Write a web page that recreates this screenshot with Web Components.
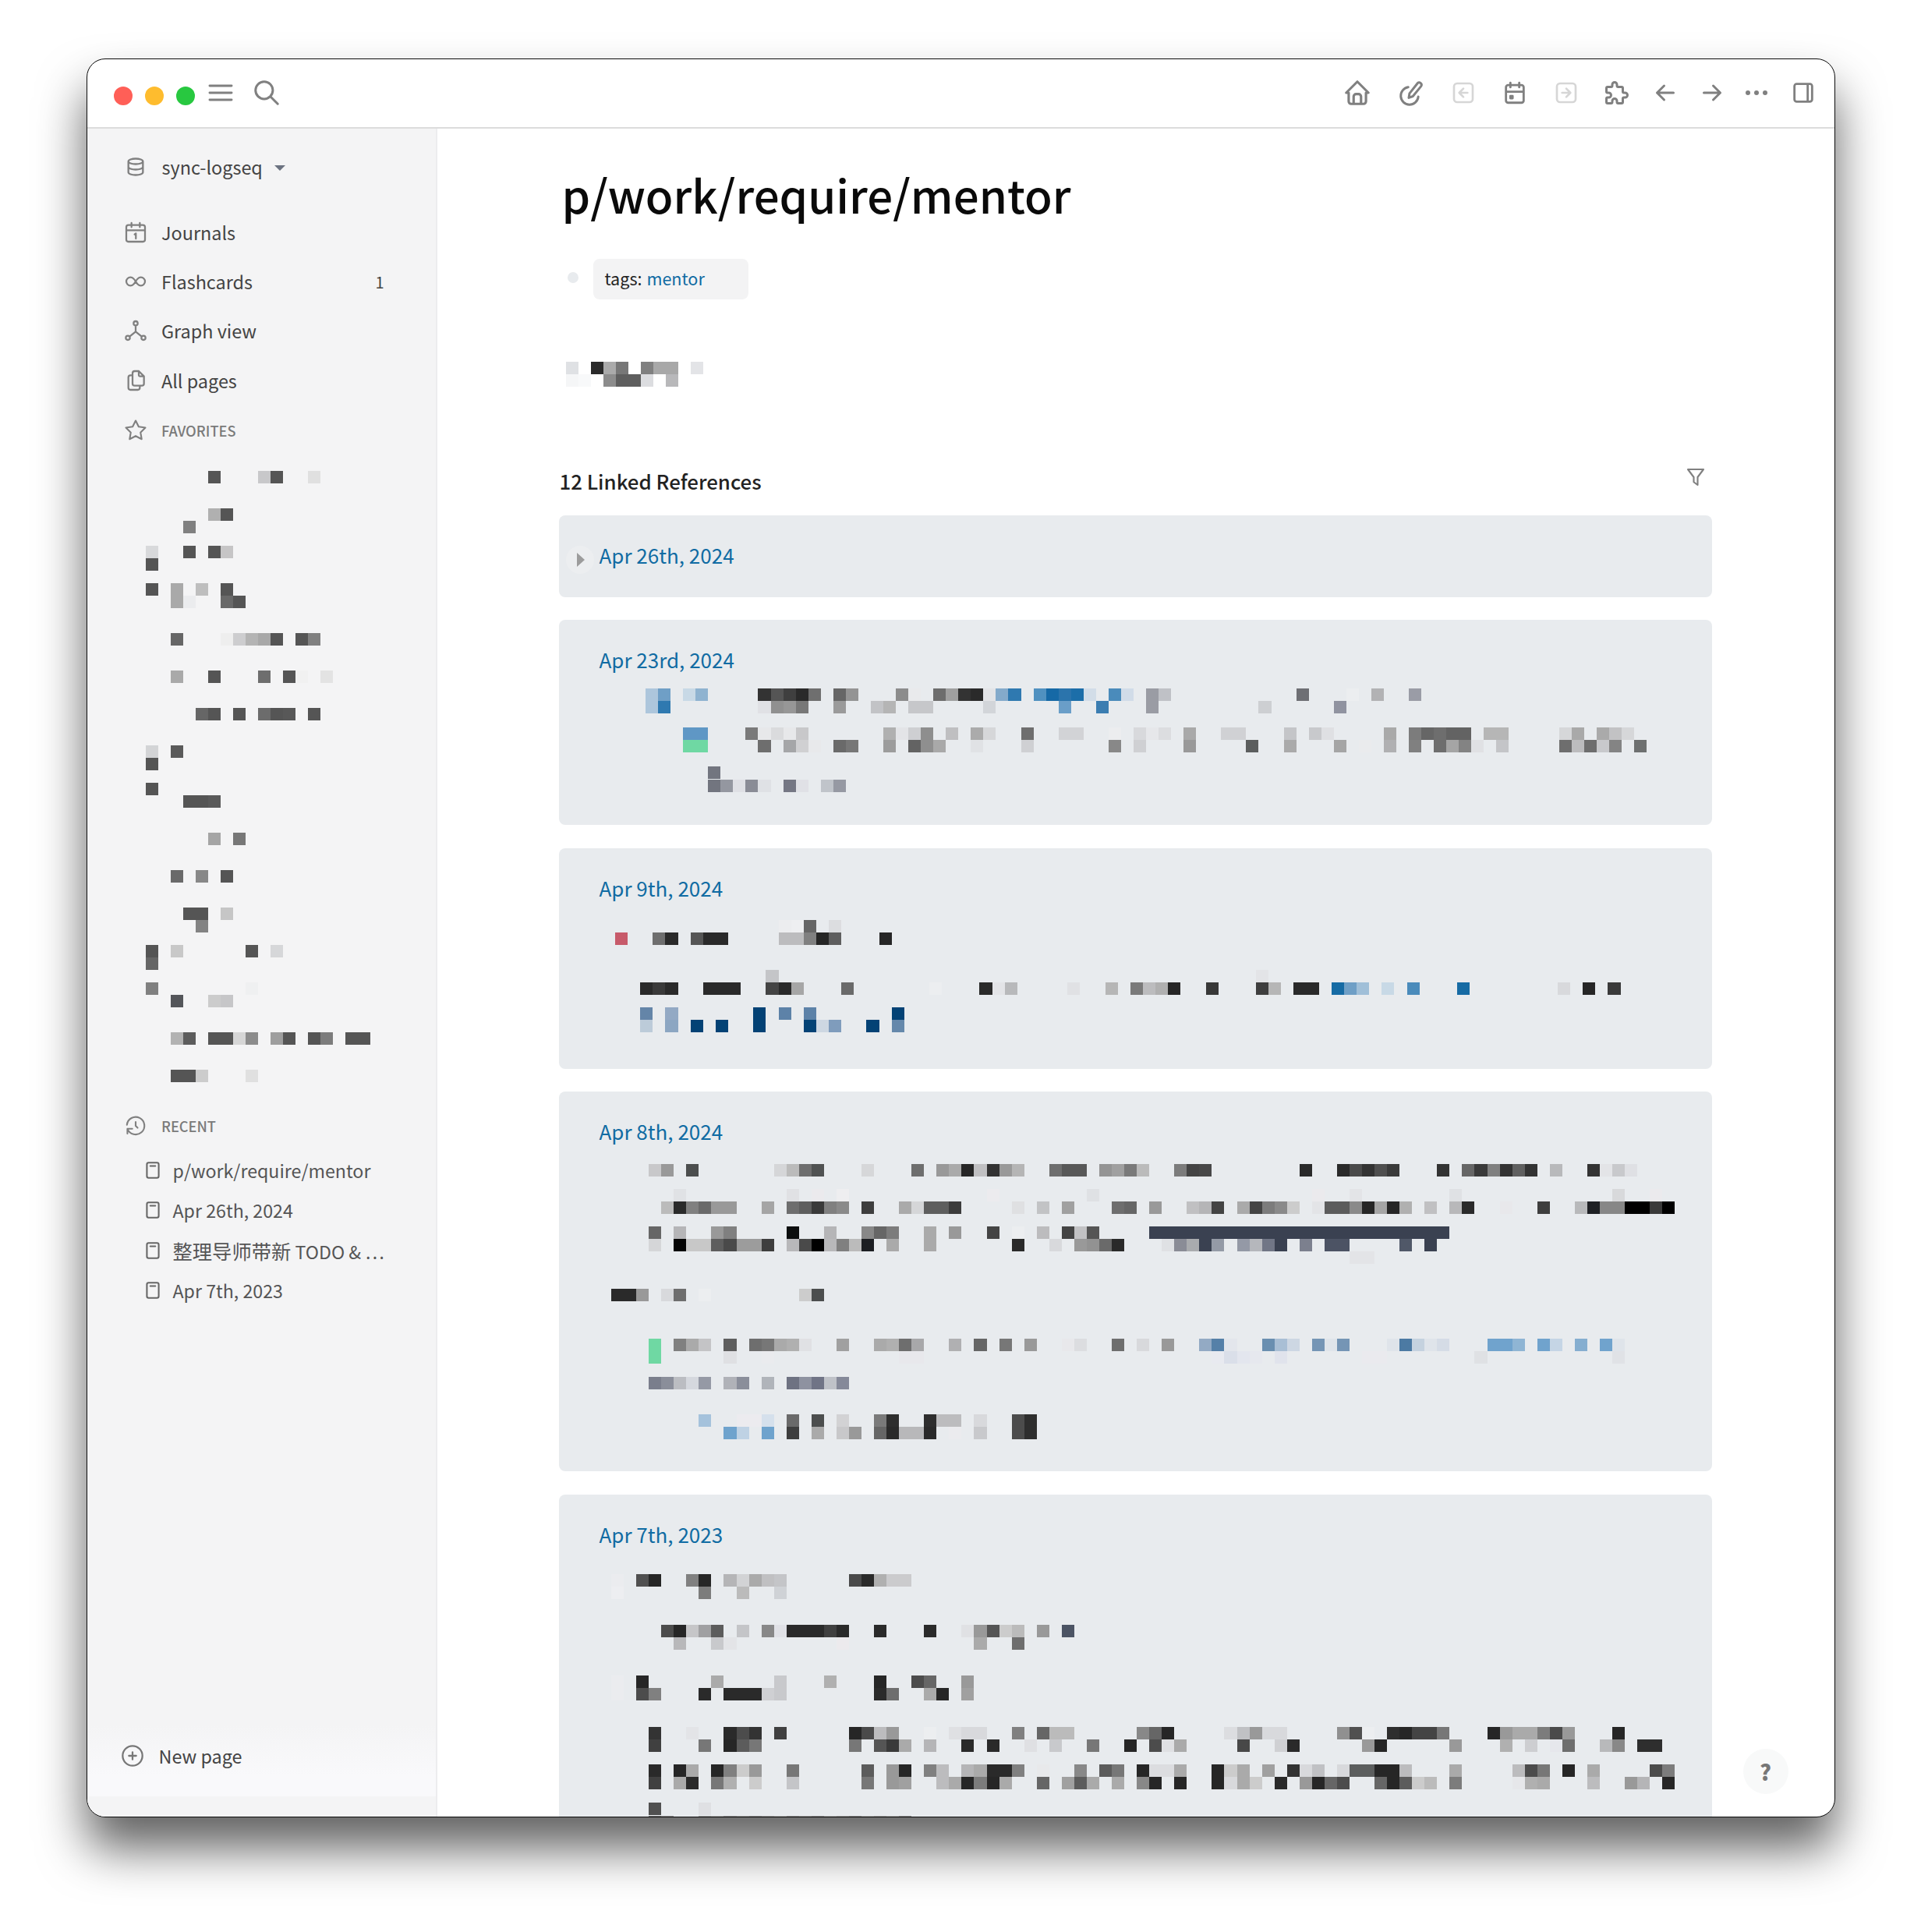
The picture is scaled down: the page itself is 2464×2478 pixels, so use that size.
<!DOCTYPE html>
<html>
<head>
<meta charset="utf-8">
<title>p/work/require/mentor</title>
<style>
  html, body { margin: 0; background: #fff; overflow: hidden; }
  body { font-family: "Noto Sans CJK SC", "Noto Sans", sans-serif; width: 2464px; height: 2478px; }
  .cjk { font-size: 25.3px; }
</style>
</head>
<body>
<app-window>
  <title-bar slot="top"></title-bar>
  <side-bar slot="side">
    <repo-switch>sync-logseq</repo-switch>
    <nav-item icon="calendar1">Journals</nav-item>
    <nav-item icon="infinity" count="1">Flashcards</nav-item>
    <nav-item icon="graph">Graph view</nav-item>
    <nav-item icon="files">All pages</nav-item>
    <nav-item icon="star" size="30" heading style="padding-top:2px">FAVORITES</nav-item>
    <mosaic-block name="favorites" cell="16" style="margin-left:75px;margin-top:21px" h="784"></mosaic-block>
    <nav-item icon="history" size="30" heading style="margin-top:24px">RECENT</nav-item>
    <recent-item>p/work/require/mentor</recent-item>
    <recent-item>Apr 26th, 2024</recent-item>
    <recent-item><span class="cjk">整理导师带新</span>&nbsp;TODO &amp; …</recent-item>
    <recent-item>Apr 7th, 2023</recent-item>
    <new-page slot="foot">New page</new-page>
  </side-bar>
  <page-main slot="main">
    <page-props slot="props"><a>mentor</a></page-props>
    <mosaic-block slot="props" name="pageline" cell="16" h="33" style="margin-left:9px;margin-top:80px"></mosaic-block>
    <ref-card date="Apr 26th, 2024" collapsed></ref-card>
    <ref-card date="Apr 23rd, 2024"><mosaic-block name="apr23" ox="60" h="158"></mosaic-block></ref-card>
    <ref-card date="Apr 9th, 2024"><mosaic-block name="apr9" ox="21" cell="16.12" h="178"></mosaic-block></ref-card>
    <ref-card date="Apr 8th, 2024"><mosaic-block name="apr8" ox="16" h="382"></mosaic-block></ref-card>
    <ref-card date="Apr 7th, 2023"><mosaic-block name="apr7" ox="16" h="500"></mosaic-block></ref-card>
    <help-button slot="over"></help-button>
  </page-main>
</app-window>

<script>
// tabler-ish icon paths, all on a 24 box
const ICONS = {
  home: 'M5 12H3l9-9 9 9h-2M5 12v7a2 2 0 0 0 2 2h10a2 2 0 0 0 2-2v-7M9 21v-6a2 2 0 0 1 2-2h2a2 2 0 0 1 2 2v6',
  sketch: 'M17.5 3.8a2 2 0 0 1 3 2.6L13.5 15l-3.5 1.3.6-3.7zM9.5 7.2a7.5 7.5 0 1 0 8.6 8.2',
  backbox: 'M6 3h12a3 3 0 0 1 3 3v12a3 3 0 0 1-3 3H6a3 3 0 0 1-3-3V6a3 3 0 0 1 3-3zM8 12h8M8 12l4 4M8 12l4-4',
  fwdbox: 'M6 3h12a3 3 0 0 1 3 3v12a3 3 0 0 1-3 3H6a3 3 0 0 1-3-3V6a3 3 0 0 1 3-3zM16 12H8M16 12l-4 4M16 12l-4-4',
  calendar: 'M6 5h12a2 2 0 0 1 2 2v12a2 2 0 0 1-2 2H6a2 2 0 0 1-2-2V7a2 2 0 0 1 2-2zM16 3v4M8 3v4M4 11h16M8 15h2v2H8z',
  puzzle: 'M4 7h3a1 1 0 0 0 1-1V5a2 2 0 0 1 4 0v1a1 1 0 0 0 1 1h3a1 1 0 0 1 1 1v3a1 1 0 0 0 1 1h1a2 2 0 0 1 0 4h-1a1 1 0 0 0-1 1v3a1 1 0 0 1-1 1h-3a1 1 0 0 1-1-1v-1a2 2 0 0 0-4 0v1a1 1 0 0 1-1 1H4a1 1 0 0 1-1-1v-3a1 1 0 0 1 1-1h1a2 2 0 0 0 0-4H4a1 1 0 0 1-1-1V8a1 1 0 0 1 1-1',
  left: 'M5 12h14M5 12l6 6M5 12l6-6',
  right: 'M5 12h14M19 12l-6 6M19 12l-6-6',
  panel: 'M6 4h12a2 2 0 0 1 2 2v12a2 2 0 0 1-2 2H6a2 2 0 0 1-2-2V6a2 2 0 0 1 2-2zM16 4v16',
  search: 'M10 10m-7 0a7 7 0 1 0 14 0a7 7 0 1 0-14 0M21 21l-6-6',
  menu: 'M4 6.9h16M4 12h16M4 17.1h16',
  database: 'M12 6m-8 0a8 3 0 1 0 16 0a8 3 0 1 0-16 0M4 6v6a8 3 0 0 0 16 0V6M4 12v6a8 3 0 0 0 16 0v-6',
  calendar1: 'M5 5h14a2 2 0 0 1 2 2v12a2 2 0 0 1-2 2H5a2 2 0 0 1-2-2V7a2 2 0 0 1 2-2zM16 3v4M8 3v4M3 10h18M11 14l1.2-1v5',
  infinity: 'M9.828 9.172a4 4 0 1 0 0 5.656a10 10 0 0 0 2.172-2.828a10 10 0 0 1 2.172-2.828a4 4 0 1 1 0 5.656a10 10 0 0 1-2.172-2.828a10 10 0 0 0-2.172-2.828',
  graph: 'M12 5m-2 0a2 2 0 1 0 4 0a2 2 0 1 0-4 0M4.5 19m-2 0a2 2 0 1 0 4 0a2 2 0 1 0-4 0M19.5 19m-2 0a2 2 0 1 0 4 0a2 2 0 1 0-4 0M12 7v6M6.2 17.8L12 13l5.8 4.8',
  files: 'M15 3v4a1 1 0 0 0 1 1h4M18 17h-7a2 2 0 0 1-2-2V5a2 2 0 0 1 2-2h4l5 5v7a2 2 0 0 1-2 2zM16 17v2a2 2 0 0 1-2 2H7a2 2 0 0 1-2-2V9a2 2 0 0 1 2-2h2',
  star: 'M12 17.75l-6.172 3.245 1.179-6.873-5-4.867 6.9-1L12 2l3.086 6.255 6.9 1-5 4.867 1.179 6.873z',
  history: 'M12 8v4l2 2M3.05 11a9 9 0 1 1 .5 4M3.55 20v-5h5',
  page: 'M7 3h10a2 2 0 0 1 2 2v14a2 2 0 0 1-2 2H7a2 2 0 0 1-2-2V5a2 2 0 0 1 2-2zM9 7h6',
  plus: 'M12 12m-9.5 0a9.5 9.5 0 1 0 19 0a9.5 9.5 0 1 0-19 0M8.5 12h7M12 8.5v7',
  filter: 'M4 4h16l-6 8v8l-4-3v-5z'
};

class UiIcon extends HTMLElement {
  constructor() {
    super();
    this.attachShadow({ mode: 'open' });
    const size = this.getAttribute('size') || 28;
    const sw = this.getAttribute('sw') || 2;
    this.shadowRoot.innerHTML = `
      <style>
        :host { display: inline-flex; flex: none; color: inherit; line-height: 0; }
      </style>
      <svg width="${size}" height="${size}" viewBox="0 0 24 24" fill="none" stroke="currentColor"
           stroke-width="${sw}" stroke-linecap="round" stroke-linejoin="round">
        <path d="${ICONS[this.getAttribute('name')] || ''}"/>
      </svg>`;
  }
}
customElements.define('ui-icon', UiIcon);

class AppWindow extends HTMLElement {
  constructor() {
    super();
    this.attachShadow({ mode: 'open' });
    this.shadowRoot.innerHTML = `
      <style>
        :host {
          display: flex; flex-direction: column; box-sizing: border-box;
          width: 2243px; height: 2256.5px; margin: 74.5px 0 0 110.5px;
          background: #fff; border: 1.5px solid #0c0c0c; border-radius: 24px;
          box-shadow: 0 40px 62px rgba(0,0,0,.62);
          overflow: hidden;
        }
        .body { flex: 1; min-height: 0; display: flex; }
      </style>
      <slot name="top"></slot>
      <div class="body">
        <slot name="side"></slot>
        <slot name="main"></slot>
      </div>`;
  }
}
customElements.define('app-window', AppWindow);

class TitleBar extends HTMLElement {
  constructor() {
    super();
    this.attachShadow({ mode: 'open' });
    const right = [
      ['home', 38, 0], ['sketch', 36, 32], ['backbox', 32, 33], ['calendar', 34, 33],
      ['fwdbox', 32, 33], ['puzzle', 36, 31], ['left', 36, 26], ['right', 36, 24]
    ];
    this.shadowRoot.innerHTML = `
      <style>
        :host {
          display: flex; align-items: center; flex: none; box-sizing: border-box; height: 89px;
          padding: 0 22.5px 0 34px; border-bottom: 2px solid #dcdcdc; color: #808080;
        }
        .dot { width: 24px; height: 24px; border-radius: 50%; margin-right: 16px; margin-top: 8px; }
        .menu { margin: 0 0 0 -4px; }
        .search { margin: 0 0 0 19.5px; }
        .right { margin-left: auto; display: flex; align-items: center; }
        .dis { color: #d6d6d6; }
        .dots { display: flex; gap: 5px; margin-left: 25px; }
        .dots i { width: 6px; height: 6px; background: #808080; border-radius: 50%; }
        .panel { margin-left: 29.5px; }
      </style>
      <div class="dot" style="background:#ff5f57"></div>
      <div class="dot" style="background:#febc2e"></div>
      <div class="dot" style="background:#28c840"></div>
      <ui-icon class="menu" name="menu" size="42" sw="1.7"></ui-icon>
      <ui-icon class="search" name="search" size="38" sw="1.9"></ui-icon>
      <div class="right">
        ${right.map(([n, s, m]) => `<ui-icon class="${/box/.test(n) ? 'dis' : ''}" name="${n}" size="${s}" style="margin-left:${m}px"></ui-icon>`).join('')}
        <div class="dots"><i></i><i></i><i></i></div>
        <ui-icon class="panel" name="panel" size="34"></ui-icon>
      </div>`;
  }
}
customElements.define('title-bar', TitleBar);

class SideBar extends HTMLElement {
  constructor() {
    super();
    this.attachShadow({ mode: 'open' });
    this.shadowRoot.innerHTML = `
      <style>
        :host {
          display: flex; flex-direction: column; flex: none; box-sizing: border-box; width: 449px;
          background: #f4f4f5; border-right: 2px solid #ececee; padding-top: 17px;
        }
        .foot { margin-top: auto; }
      </style>
      <slot></slot>
      <div class="foot"><slot name="foot"></slot></div>`;
  }
}
customElements.define('side-bar', SideBar);

class RepoSwitch extends HTMLElement {
  constructor() {
    super();
    this.attachShadow({ mode: 'open' });
    this.shadowRoot.innerHTML = `
      <style>
        :host {
          display: flex; align-items: center; height: 64px; margin-bottom: 20.5px; padding-left: 48.5px;
          font-size: 23.4px; color: #444;
        }
        ui-icon { color: #808080; margin-right: 19.5px; }
        i { width: 0; height: 0; margin-left: 15px; margin-top: 4px;
            border-left: 7px solid transparent; border-right: 7px solid transparent; border-top: 7px solid #6b7280; }
      </style>
      <ui-icon name="database" size="28" sw="2"></ui-icon><slot></slot><i></i>`;
  }
}
customElements.define('repo-switch', RepoSwitch);

class NavItem extends HTMLElement {
  constructor() {
    super();
    this.attachShadow({ mode: 'open' });
    const heading = this.hasAttribute('heading');
    const count = this.getAttribute('count');
    this.shadowRoot.innerHTML = `
      <style>
        :host {
          display: flex; align-items: center; box-sizing: border-box; height: 63.4px;
          padding: 0 66px 0 47px; font-size: ${heading ? 18.2 : 23.4}px;
          color: ${heading ? '#7a7a7a' : '#444'}; font-weight: ${heading ? 500 : 400};
        }
        .ic { width: 30px; display: flex; justify-content: center; margin-right: 18.5px; color: #808080; }
        .n { margin-left: auto; font-size: 20px; }
      </style>
      <div class="ic"><ui-icon name="${this.getAttribute('icon')}" size="${this.getAttribute('size') || 32}" sw="1.7"></ui-icon></div>
      <slot></slot>
      ${count ? `<span class="n">${count}</span>` : ''}`;
  }
}
customElements.define('nav-item', NavItem);

class RecentItem extends HTMLElement {
  constructor() {
    super();
    this.attachShadow({ mode: 'open' });
    this.shadowRoot.innerHTML = `
      <style>
        :host {
          display: flex; align-items: center; height: 51.3px; padding-left: 71px;
          font-size: 23.2px; color: #555; white-space: nowrap;
        }
        ui-icon { color: #666; margin-right: 13px; }
      </style>
      <ui-icon name="page" size="26" sw="1.9"></ui-icon><span><slot></slot></span>`;
  }
}
customElements.define('recent-item', RecentItem);

class NewPage extends HTMLElement {
  constructor() {
    super();
    this.attachShadow({ mode: 'open' });
    this.shadowRoot.innerHTML = `
      <style>
        :host {
          display: flex; align-items: center; box-sizing: border-box; height: 130px; margin-bottom: 26px;
          padding: 25px 0 0 42px; font-size: 23.4px; color: #444;
          background: linear-gradient(#f4f4f5 30%, #f9f9fb 80%);
        }
        ui-icon { color: #777; margin-right: 18px; }
      </style>
      <ui-icon name="plus" size="32" sw="1.7"></ui-icon><slot></slot>`;
  }
}
customElements.define('new-page', NewPage);

class PageMain extends HTMLElement {
  constructor() {
    super();
    this.attachShadow({ mode: 'open' });
    this.shadowRoot.innerHTML = `
      <style>
        :host { display: block; flex: 1; min-width: 0; position: relative; overflow: hidden; }
        .wrap { width: 1479px; margin-left: 156px; }
        .col { display: flex; flex-direction: column; gap: 29.6px; }
        h1 { margin: 0; padding: 30px 0 0 4px; height: 108px; line-height: 108px; font-size: 58.2px; font-weight: 500; color: #0a0a0a; white-space: nowrap; }
        .head { display: flex; justify-content: space-between; align-items: center; height: 40px; margin: 100px 0 24px;
                font-size: 25.8px; font-weight: 500; color: #222; }
        .head span { margin-left: 1px; }
        .head ui-icon { color: #808080; margin: -10px 6px 0 0; }
        .over { position: absolute; inset: 0; pointer-events: none; }
      </style>
      <div class="wrap">
        <h1>p/work/require/mentor</h1>
        <slot name="props"></slot>
        <div class="head"><span>12 Linked References</span><ui-icon name="filter" size="30" sw="1.7"></ui-icon></div>
        <div class="col"><slot></slot></div>
      </div>
      <div class="over"><slot name="over"></slot></div>`;
  }
}
customElements.define('page-main', PageMain);

class PageProps extends HTMLElement {
  constructor() {
    super();
    this.attachShadow({ mode: 'open' });
    this.shadowRoot.innerHTML = `
      <style>
        :host { display: flex; align-items: center; margin: 29px 0 0 10px; height: 52px; }
        .bullet { width: 14px; height: 14px; border-radius: 50%; background: #e8ebee; margin: -4px 19px 0 1px; }
        .box { width: 199px; height: 52px; box-sizing: border-box; padding: 0 0 2px 15px; display: flex; align-items: center;
               background: #f3f3f4; border-radius: 8px; font-size: 21.6px; color: #222; white-space: pre; }
        ::slotted(a) { color: #106ba3; margin-left: 1px; }
      </style>
      <div class="bullet"></div>
      <div class="box">tags: <slot></slot></div>`;
  }
}
customElements.define('page-props', PageProps);

class RefCard extends HTMLElement {
  constructor() {
    super();
    this.attachShadow({ mode: 'open' });
    const fold = this.hasAttribute('collapsed');
    this.shadowRoot.innerHTML = `
      <style>
        :host {
          display: block; position: relative; box-sizing: border-box; background: #e8ebee; border-radius: 8px;
          padding: 31px 0 33px 51px;
        }
        .date { height: 41px; line-height: 39px; margin-left: 1px; font-size: 26px; color: #106ba3; white-space: nowrap; }
        .fold { position: absolute; left: 9px; top: 39px; width: 36px; height: 36px; border-radius: 50%; background: #eceef0;
                display: flex; align-items: center; justify-content: center; }
        .fold i { width: 0; height: 0; margin-left: 2px; border-left: 10px solid #9c9c9c; border-top: 9px solid transparent; border-bottom: 9px solid transparent; }
      </style>
      ${fold ? '<div class="fold"><i></i></div>' : ''}
      <div class="date">${this.getAttribute('date')}</div>
      <slot></slot>`;
  }
}
customElements.define('ref-card', RefCard);

class HelpButton extends HTMLElement {
  constructor() {
    super();
    this.attachShadow({ mode: 'open' });
    this.shadowRoot.innerHTML = `
      <style>
        :host {
          position: absolute; right: 59px; bottom: 29px; width: 58px; height: 58px; border-radius: 50%;
          background: #f8f9f9; display: flex; align-items: center; justify-content: center;
          font-size: 28px; font-weight: 900; color: #777;
        }
      </style>?`;
  }
}
customElements.define('help-button', HelpButton);

// redacted text: each row is [y offset, "col colour col colour ..."]
const MOSAICS = {
  favorites: [
    [0, '5 555 9 c8c8ca 10 555 13 e0e0e0'],
    [48, '5 b0b0b0 6 555'],
    [64, '3 808080'],
    [96, '0 d8d9db 3 555 5 555 6 c6c5c6'],
    [112, '0 555'],
    [144, '0 555 2 a9a9a9 4 bebebe 6 555'],
    [160, '2 a9a9a9 3 ebecee 6 696969 7 555'],
    [208, '2 666 6 eee 7 cdcdcf 8 b4b4b4 9 a8a8a8 10 555 12 555 13 808080'],
    [256, '2 a9a9a9 5 555 9 6e6e6e 11 555 12 f1f1f1 14 e3e3e3'],
    [304, '4 666 5 555 7 555 9 6c6c6c 10 555 11 585858 13 555'],
    [352, '0 d3d4d6 2 5a5a5a'],
    [368, '0 555'],
    [400, '0 555'],
    [416, '3 555 4 555 5 5a5a5a'],
    [464, '5 a5a5a5 7 777'],
    [512, '2 6a6a6a 4 888 6 555'],
    [560, '3 555 4 555 6 c6c6c6'],
    [576, '4 838383'],
    [608, '0 555 2 c8c8c8 8 555 10 d6d7d9'],
    [624, '0 666'],
    [656, '0 808080 8 eff0f1'],
    [672, '2 54565a 5 ccc 6 c6c6c8'],
    [720, '2 b2b2b2 3 5c5c5c 5 555 6 555 7 d6d6d6 8 8c8c8c 10 9e9e9e 11 555 13 555 14 7c7c7c 16 555 17 555'],
    [768, '2 555 3 555 4 ccc 8 e0e0e0']
  ],
  pageline: [
    [0, '0 dfe1e4 2 2a2a2a 3 aaa 4 777 6 808080 7 a8a8a8 8 a8a8a8 10 e3e4e7'],
    [16, '0 f5f6f7 1 f8f9fa 3 8c8c8c 4 5e5e5e 5 5e5e5e 6 dcdde0 8 b8b8ba']
  ],
  apr23: [
    [16, '0 adc6dc 1 6f9fc6 3 c8d9e6 4 8fb3d0 9 333 10 555 11 3f3f3f 12 2a2a2a 13 6f6f6f 15 666 16 949494 20 8c8c8c 21 e9eaec 23 6d6d6d 24 a0a0a0 25 333 26 2a2a2a 27 e3e4e7 28 84aacb 29 2f79b0 31 5091c0 32 1669a6 33 2b74ac 34 1c6ea9 35 d2dde8 37 4a8bbb 38 d1dce8 40 9a9ca4 41 bfc1c6 52 6e6f74 56 eceef0 58 b2b2b4 61 9a9ca6'],
    [32, '0 adc6dc 1 2f79b0 9 e0e1e5 10 909090 11 979797 12 787878 15 9a9a9a 18 c2c3c6 19 b5b5b5 21 c6c7ca 22 c6c7ca 27 d2d5d9 33 6a9ec8 36 3b7db1 40 9a9ca4 49 cdcfd2 55 9093a0'],
    [66, '3 5f97c5 4 5f97c5 8 7a7a7a 9 e7e8ea 10 dadbdd 11 e7e8ea 12 c8c8ca 19 b0b0b0 20 e3e4e7 21 cecfd2 22 8e8e8e 24 bfbfc1 26 ababab 27 d6d7d9 30 6e6e6e 33 d2d3d6 34 d2d3d6 37 ecedef 39 d8d9dc 40 e6e7ea 41 dcdde0 43 a9a9a9 46 d0d1d4 47 d0d1d4 51 c4c5c8 53 c8c9cc 54 dfe0e3 59 a9a9a9 61 7c7c7c 62 666 63 6e6e6e 64 636363 65 636363 67 b6b6b6 68 b6b6b6 73 d6d7d9 74 a9a9a9 76 aaa 77 c2c2c4 78 d6d7d9'],
    [82, '3 6fd8a3 4 6fd8a3 9 6e6e6e 11 a5a6a8 12 d0d0d2 13 e8e9eb 15 6a6a6a 16 777 19 9c9c9c 21 636363 22 8f8f8f 23 a9a9a9 26 e0e2e5 30 cfd0d3 37 888 39 cfd0d3 43 999 48 5c5e5e 51 aaa 55 a5a5a5 57 eaebed 59 b0b0b2 61 808080 63 6e6e6e 64 a5a5a5 65 838383 66 e0e1e4 68 c4c5c8 73 6e6e6e 74 bcbcbe 75 6e6e6e 76 c8c9cc 77 848484 79 6e7070'],
    [116, '5 72757f'],
    [133, '5 72757f 6 9497a0 7 dfe0e5 8 8a8c96 9 dfe1e5 11 757784 12 e0e1e6 14 c0c4ca 15 9699a3']
  ],
  apr9: [
    [20, '13 ecedef 14 eeeff1 15 666 17 dcdde0'],
    [36, '0 c75a6a 3 6e6e6e 4 2a2a2a 6 555 7 2a2a2a 8 2a2a2a 13 bcbcbe 14 bcbcbe 15 808080 16 262626 17 5e5e5e 21 262626'],
    [84, '12 c4c5c8 51 e3e4e7'],
    [100, '2 2a2a2a 3 3a3a3a 4 2a2a2a 7 2a2a2a 8 2a2a2a 9 2a2a2a 12 444 13 2a2a2a 14 a6a6a6 18 6a6a6a 25 eceef0 29 2a2a2a 30 e3e4e7 31 b8b9bb 36 e0e1e4 39 b6b6b6 41 7a7a7a 42 bcbcbe 43 b0b0b0 44 262626 47 383838 51 3e3e3e 52 b6b6b6 54 2a2a2a 55 2a2a2a 57 166ba4 58 6f9fc6 59 a0bfd8 61 c8d9e6 63 4a8bbb 67 166ba4 75 d8d9dc 77 262626 79 3a3a3a'],
    [132, '2 6485a8 4 93a9c4 11 034275 13 5d82a8 15 5d82a8 22 034275'],
    [148, '2 bccbd9 4 8ca6c2 6 034275 8 034275 11 034275 15 034275 16 cdd7e2 17 7f9cbc 20 034275 22 6588ab']
  ],
  apr8: [
    [21, '3 c8c8ca 4 999 6 4c4e4e 13 d5d6d8 14 bbb 15 6e6e6e 16 505252 20 d6d7d9 24 6e6e6e 26 999 27 aaa 28 262626 29 c0c0c2 30 333 31 999 32 b5b5b5 35 6e6e6e 36 585858 37 585858 39 949494 40 a0a0a0 41 7a7a7a 42 bbb 45 7c7c7c 46 444 47 484848 55 2a2a2a 58 2a2a2a 59 4a4a4a 60 333 61 4f4f4f 62 3a3a3a 66 333 68 666 69 3a3a3a 70 808080 71 333 72 606060 73 333 75 b8b9bb 78 333 79 e3e4e7 80 c8c9cc 81 dfe0e4'],
    [53, '5 e0e2e5 14 e0e1e4 16 ebeaed 18 eeeef0 30 ecebee 38 dfe1e4 56 ebeaed 59 e3e4e7 67 dfe1e4 80 d8d9db 83 ebeaed'],
    [69, '4 bbb 5 2a2a2a 6 808080 7 6a6a6a 8 999 9 999 12 a5a5a5 14 6e6e6e 15 5e5e5e 16 3a3a3a 17 808080 18 8a8a8a 20 3e3e3e 23 aaa 24 d5d6d8 25 5e5e5e 26 5e5e5e 27 3c3c3c 32 dfe0e2 34 c2c3c5 36 a0a0a0 40 6e6e6e 41 666 43 999 46 c0c0c2 47 b5b5b7 48 444 50 aaa 51 444 52 7c7c7c 53 8a8a8a 54 ccc 56 e3e4e7 57 5c5c5c 58 5c5c5c 59 8a8a8a 60 262626 61 a5a5a5 62 262626 63 b0b0b0 65 c0c0c2 67 b8b8ba 68 2a2a2a 71 e8e8eb 74 3e3e3e 77 b8b9bb 78 1e2024 79 878787 80 878787 81 000 82 000 83 3a3a3a 84 000'],
    [101, '3 666 5 b5b5b7 8 999 9 808080 14 0c0e0e 17 b5b5b7 20 888 21 666 22 7c7c7c 25 aaa 27 999 30 444 32 eceef0 34 bcbcbe 36 444 37 c2c2c4 38 555 43 3a4151 44 3a4151 45 3a4151 46 3a4151 47 3a4151 48 3a4151 49 3a4151 50 3a4151 51 3a4151 52 3a4151 53 3a4151 54 3a4151 55 3a4151 56 3a4151 57 3a4151 58 3a4151 59 3a4151 60 3a4151 61 3a4151 62 3a4151 63 3a4151 64 3a4151 65 3a4151 66 3a4151'],
    [117, '3 d5d6d8 5 050505 6 c8c8c8 7 c8c8c8 8 5e5e5e 9 4a4a4a 10 9c9c9c 11 9c9c9c 12 3e3e3e 14 b8b8ba 15 4a4a4a 16 000 17 b8b8ba 18 808080 19 bbb 20 1c1e22 22 aaa 25 aaa 32 2a2a2a 35 d8d9dc 37 999 38 929292 39 6a6a6a 40 2a2a2a 44 dfe1e4 45 8a8c96 46 a9abae 47 3a4151 48 949aa6 50 9499a6 51 b5b7bc 52 717686 53 3a4151 55 7c808e 57 4c5364 58 4c5364 63 505868 65 3a4151'],
    [133, '59 e3e4e7 60 e3e4e7'],
    [181, '0 2a2a2a 1 2a2a2a 2 999 4 d8d9dc 5 6e6e6e 7 eceef0 15 ccc 16 4c4e4e'],
    [245, '3 6fd8a3 5 808080 6 aaa 7 c4c4c6 9 5e5e5e 11 6e6e6e 12 777 13 aaa 14 b0b0b0 15 e0e1e4 18 a0a0a0 21 aaa 22 b0b0b0 23 6e6e6e 24 a8a8aa 27 b0b0b2 29 666 31 777 33 999 36 e8e8eb 37 dcdde0 40 6e6e6e 42 d8d9dc 44 999 47 93aac4 48 5580a8 49 e3e6ec 52 6a8fb0 53 a9bfd5 54 cdd7e3 56 7595b5 57 dfe4ea 58 7595b5 62 dfe4ea 63 4c7aa3 64 c5d2df 65 dfe4ea 66 d5dce6 70 70a3cd 71 70a3cd 72 8fb5d4 74 70a3cd 75 c5d5e5 77 85aed0 79 70a3cd 80 dfe4ea'],
    [261, '3 6fd8a3 9 dfe0e3 12 eaebee 23 e8e8ec 24 e8e8ec 48 e8eaf0 49 dadfe9 50 e3e6ee 51 e6e8ee 53 e0e3ec 60 eaeaee 61 eaeaee 69 dfe1e4 80 e0e2e6'],
    [294, '3 7a7e8c 4 8a8e9a 5 bbbdc2 6 d5d8de 7 9599a5 9 b0b2b8 10 8a8e9a 12 b0b4ba 14 6e7282 15 8e92a0 16 707486 17 bfc2c8 18 858999'],
    [342, '7 a5c2dc 10 ecebef 11 ecebef 12 d5e0ec 14 6a6a6a 16 4c4e4e 18 d2d2d4 21 7a7a7a 22 2e2e2e 25 2e2e2e 26 bcbcbe 27 bcbcbe 29 d8d9dc 32 4c4c4c 33 2e2e2e'],
    [358, '9 6fa3cd 10 bfd2e4 12 6fa3cd 14 3e3e3e 16 aaa 18 c8c8ca 19 999 21 666 22 2a2a2a 23 b8b8ba 24 b8b8ba 25 2a2a2a 27 ebebee 29 c8c9cc 32 4c4c4c 33 2e2e2e']
  ],
  apr7: [
    [30, '0 ebecef 2 505050 3 262626 6 808080 7 262626 9 b5b5b7 10 d2d3d5 11 aaa 12 c0c0c2 13 c4c5c8 19 4a4a4a 20 2a2a2a 21 b0b0b0 22 cbcbcd 23 cbcbcd'],
    [46, '0 edeef1 7 7c7c7c 10 bbb 13 cfd2d6'],
    [95, '4 4c4c4c 5 262626 6 c6c6c8 7 a0a0a2 8 5c5c5c 10 c4c5c8 12 888 13 e0e1e6 14 2a2a2a 15 2a2a2a 16 2a2a2a 17 404040 18 2a2a2a 21 2a2a2a 25 2a2a2a 28 e0e1e4 29 999 30 555 31 ccc 32 bbb 34 999 36 4c5464'],
    [111, '5 b8b8ba 8 c8c9cc 9 e3e4e7 18 eceaed 29 aaa 32 6e6e6e'],
    [160, '0 ebecef 2 262626 8 aaa 13 c8c9cc 17 b0b0b0 21 262626 24 4c4c4c 25 666 28 999'],
    [176, '0 ebecef 2 4c4c4c 3 808080 7 2a2a2a 9 2a2a2a 10 2a2a2a 11 2a2a2a 12 cfd0d3 13 c8c9cc 21 2a2a2a 22 6e6e6e 25 aaa 26 262626 28 a0a0a0'],
    [226, '3 333 6 e3e4e7 9 2a2a2a 10 4c4c4c 11 333 13 404040 19 262626 20 4a4a4a 21 bcbcbe 22 999 25 eceef0 27 dfe0e3 28 d8d9dc 29 d8d9dc 32 808080 34 666 35 bbb 36 bbb 42 888 43 666 44 262626 49 dcdde0 50 c0c1c4 51 999 52 d8d9dc 53 d8d9dc 58 909090 59 505050 60 eceef0 62 2e2e2e 63 262626 64 444 65 444 66 777 70 262626 71 999 72 aaa 73 aaa 74 7c7c7c 75 4a4a4a 76 999 80 262626'],
    [242, '3 404040 7 777 9 262626 10 5c5c5c 11 777 19 777 21 555 22 3a3a3a 23 aaa 25 b5b5b7 28 2a2a2a 30 2a2a2a 33 dfe0e3 35 c8c9cc 38 777 41 262626 43 4c4c4c 44 dfe0e3 45 aaa 50 484848 53 cfd0d3 54 2a2a2a 60 999 61 262626 67 999 71 b0b0b0 73 cdced1 75 e6e7ec 76 6e6e6e 79 b8b9bb 80 888 82 2e2e2e 83 2e2e2e'],
    [274, '3 2a2a2a 5 262626 6 aaa 8 262626 9 808080 10 ccc 11 999 14 777 20 5c5c5c 22 999 23 262626 25 808080 26 bcbcbe 28 b5b5b7 29 aaa 30 2a2a2a 31 2a2a2a 32 808080 34 e8e9eb 37 888 39 5c5c5c 40 777 42 262626 43 dcdde0 44 dcdde0 45 aaa 48 262626 49 ccc 50 aaa 52 a0a0a0 54 333 55 d8d9dc 56 c0c1c4 58 d8d9dc 59 5c5e5e 60 5c5e5e 61 262626 62 262626 63 bcbcbe 67 aaa 72 bcbcbe 73 4c4c4c 74 777 76 262626 78 aaa 83 4c4c4c 84 7c7c7c'],
    [290, '3 404040 5 aaa 6 2a2a2a 8 777 9 b0b0b0 11 ccc 14 c4c5c8 20 777 22 999 23 a0a0a0 26 bcbcbe 27 aaa 28 262626 29 7c7c7c 30 262626 31 aaa 34 666 36 a0a0a0 37 5c5c5c 38 aaa 40 aaa 42 888 43 262626 45 262626 48 262626 49 d8d9dc 50 aaa 51 ccc 53 2a2a2a 55 999 56 262626 57 666 58 4c4c4c 61 666 62 262626 63 5c5c5c 64 ccc 65 bbb 67 7c7c7c 72 e6e7ea 73 b0b0b0 74 aaa 78 bcbcbe 81 999 82 b5b5b7 84 262626'],
    [323, '3 505050 7 dfe0e3'],
    [340, '3 777 4 999 7 aaa 8 bbb 9 999 10 aaa 11 999 12 aaa 13 bbb 14 999 15 aaa 16 999 17 bbb 18 aaa 19 999 20 bbb 21 aaa 22 bbb 23 999']
  ]
};

class MosaicBlock extends HTMLElement {
  constructor() {
    super();
    this.attachShadow({ mode: 'open' });
    const cell = +(this.getAttribute('cell') || 16.05);
    const ox = +(this.getAttribute('ox') || 0);
    const h = +(this.getAttribute('h') || 0);
    let rects = '';
    for (const [y, row] of MOSAICS[this.getAttribute('name')]) {
      const t = row.split(' ');
      for (let i = 0; i < t.length; i += 2) {
        rects += `<rect x="${ox + t[i] * cell}" y="${y}" width="${cell}" height="16" fill="#${t[i + 1]}"/>`;
      }
    }
    this.shadowRoot.innerHTML = `
      <style>
        :host { display: block; height: ${h}px; }
        svg { display: block; overflow: visible; }
      </style>
      <svg width="1400" height="${h}" shape-rendering="crispEdges">${rects}</svg>`;
  }
}
customElements.define('mosaic-block', MosaicBlock);
</script>
</body>
</html>
